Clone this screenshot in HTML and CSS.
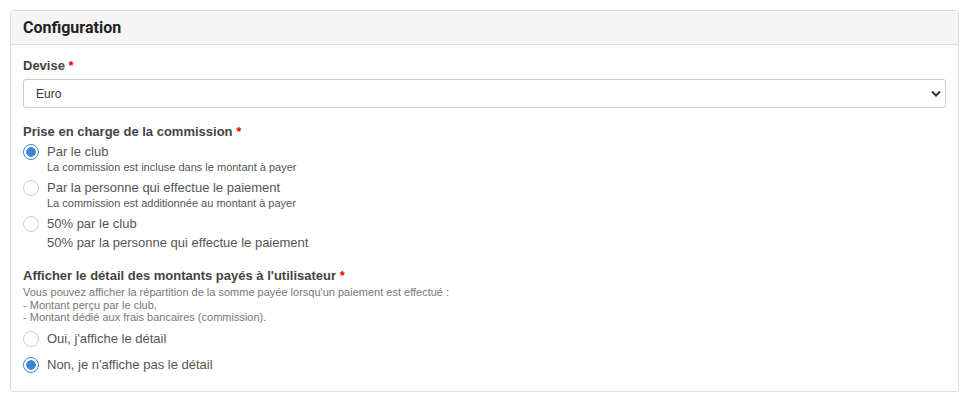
FILE: index.html
```html
<!DOCTYPE html>
<html>
<head>
  <title>Configuration</title>
  <link rel="stylesheet" href="styles.css">
</head>
<body>
  <div class="panel">
    <div class="panel-heading">
      <h3 class="panel-title">Configuration</h3>
    </div>
    <div class="panel-body">
      <div class="form-group">
        <label class="control-label" for="devise">Devise <span class="required">*</span></label>
        <div class="select-wrap">
          <select id="devise" class="form-control">
            <option>Euro</option>
          </select>
          <svg class="caret" width="10" height="7" viewBox="0 0 10 7"><path d="M1 1.5 L5 5.5 L9 1.5" fill="none" stroke="#333" stroke-width="2"/></svg>
        </div>
      </div>

      <div class="form-group">
        <div class="control-label">Prise en charge de la commission <span class="required">*</span></div>
        <label class="radio">
          <input type="radio" name="commission" checked>
          <span class="radio-text">
            Par le club
            <small>La commission est incluse dans le montant à payer</small>
          </span>
        </label>
        <label class="radio">
          <input type="radio" name="commission">
          <span class="radio-text">
            Par la personne qui effectue le paiement
            <small>La commission est additionnée au montant à payer</small>
          </span>
        </label>
        <label class="radio">
          <input type="radio" name="commission">
          <span class="radio-text">
            50% par le club
            <span class="second-line">50% par la personne qui effectue le paiement</span>
          </span>
        </label>
      </div>

      <div class="form-group">
        <div class="control-label">Afficher le détail des montants payés à l'utilisateur <span class="required">*</span></div>
        <p class="help-block">
          Vous pouvez afficher la répartition de la somme payée lorsqu'un paiement est effectué :<br>
          - Montant perçu par le club,<br>
          - Montant dédié aux frais bancaires (commission).
        </p>
        <label class="radio simple">
          <input type="radio" name="detail">
          <span class="radio-text">Oui, j'affiche le détail</span>
        </label>
        <label class="radio simple">
          <input type="radio" name="detail" checked>
          <span class="radio-text">Non, je n'affiche pas le détail</span>
        </label>
      </div>
    </div>
  </div>
</body>
</html>
```

FILE: styles.css
```css
body {
  margin: 0;
  padding: 10px 9px 8px 10px;
  background-color: #fff;
  font-family: "Liberation Sans", Arial, sans-serif;
  font-size: 13px;
  color: #555;
}

.panel {
  border: 1px solid #ddd;
  border-radius: 3px;
  background-color: #fff;
}

.panel-heading {
  background-color: #f5f5f5;
  border-bottom: 1px solid #ddd;
  border-radius: 3px 3px 0 0;
  padding: 7px 12px 7px 12px;
}

.panel-title {
  margin: 0;
  font-family: Roboto, "Liberation Sans", sans-serif;
  font-size: 16px;
  font-weight: bold;
  line-height: 19px;
  color: #222;
}

.panel-body {
  padding: 13px 12px 17px 12px;
}

.form-group {
  margin-bottom: 16px;
}

.form-group:last-child {
  margin-bottom: 0;
}

.control-label {
  display: block;
  font-weight: bold;
  line-height: 16px;
  margin-bottom: 3px;
  color: #444;
}

.required {
  color: #e00;
}

.select-wrap {
  position: relative;
  padding-top: 2px;
}

.form-control {
  display: block;
  width: 100%;
  height: 29px;
  padding: 0 12px;
  border: 1px solid #ccc;
  border-radius: 3px;
  background-color: #fff;
  font-family: "Liberation Sans", Arial, sans-serif;
  font-size: 12px;
  color: #333;
  -webkit-appearance: none;
  appearance: none;
}

.caret {
  position: absolute;
  right: 5px;
  top: 13px;
}

.radio {
  display: flex;
  align-items: flex-start;
  margin-bottom: 5px;
  line-height: 18px;
  cursor: pointer;
}

.radio.simple {
  margin-bottom: 8px;
}

.radio:last-child {
  margin-bottom: 0;
}

.radio input {
  -webkit-appearance: none;
  appearance: none;
  flex: none;
  width: 16px;
  height: 16px;
  margin: 1px 8px 0 0;
  border: 1px solid #ccc;
  border-radius: 50%;
  background-color: #fff;
}

.radio input:checked {
  border-color: #3b87d2;
  background: radial-gradient(circle, #3b87d2 0, #3b87d2 4.5px, #fff 5px);
}

.radio-text small {
  display: block;
  font-size: 11px;
  line-height: 13px;
  color: #555;
}

.radio-text .second-line {
  display: block;
  margin-top: 1px;
}

.help-block {
  margin: -1px 0 6px 0;
  font-size: 11px;
  line-height: 12.5px;
  color: #777;
}
```
